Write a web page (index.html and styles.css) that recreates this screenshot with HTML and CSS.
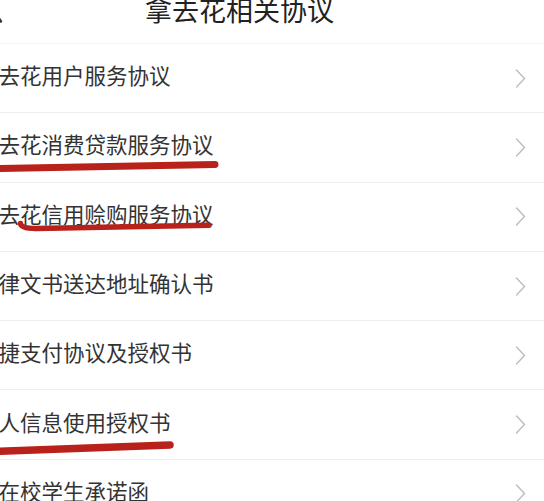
FILE: index.html
```html
<!DOCTYPE html>
<html lang="zh-CN">
<head>
<meta charset="utf-8">
<title>拿去花相关协议</title>
<link rel="stylesheet" href="styles.css">
</head>
<body>
<div class="page">
  <header class="nav">
    <svg class="back" width="4" height="43" viewBox="0 0 4 43"><path d="M-4,14 L1,21.5" stroke="#333" stroke-width="2.4" fill="none" stroke-linecap="round"/></svg>
    <h1 class="title">拿去花相关协议</h1>
  </header>
  <ul class="list">
    <li class="row"><span class="label">拿去花用户服务协议</span><svg class="chev" width="11" height="19" viewBox="0 0 11 19"><polyline points="1.5,1 9.5,9.5 1.5,18" /></svg></li>
    <li class="row"><span class="label">拿去花消费贷款服务协议</span><svg class="chev" width="11" height="19" viewBox="0 0 11 19"><polyline points="1.5,1 9.5,9.5 1.5,18" /></svg></li>
    <li class="row"><span class="label">拿去花信用赊购服务协议</span><svg class="chev" width="11" height="19" viewBox="0 0 11 19"><polyline points="1.5,1 9.5,9.5 1.5,18" /></svg></li>
    <li class="row"><span class="label">法律文书送达地址确认书</span><svg class="chev" width="11" height="19" viewBox="0 0 11 19"><polyline points="1.5,1 9.5,9.5 1.5,18" /></svg></li>
    <li class="row"><span class="label">快捷支付协议及授权书</span><svg class="chev" width="11" height="19" viewBox="0 0 11 19"><polyline points="1.5,1 9.5,9.5 1.5,18" /></svg></li>
    <li class="row"><span class="label">个人信息使用授权书</span><svg class="chev" width="11" height="19" viewBox="0 0 11 19"><polyline points="1.5,1 9.5,9.5 1.5,18" /></svg></li>
    <li class="row"><span class="label">非在校学生承诺函</span><svg class="chev" width="11" height="19" viewBox="0 0 11 19"><polyline points="1.5,1 9.5,9.5 1.5,18" /></svg></li>
  </ul>
  <svg class="marks" width="544" height="501" viewBox="0 0 544 501">
    <path d="M-6,168.5 Q110,166.5 215,164.5" stroke-width="7"/>
    <path d="M20.5,223.5 Q21,228.5 36,228.5 L209,225.3" stroke-width="5.5"/>
    <path d="M-6,451.5 Q85,448 170,445" stroke-width="7.5"/>
  </svg>
</div>
</body>
</html>
```
FILE: styles.css
```css
* { box-sizing: border-box; }
html, body {
  margin: 0;
  padding: 0;
  background: #ffffff;
}
body {
  font-family: "Noto Sans CJK SC", "Noto Sans", sans-serif;
  color: #333333;
  overflow: hidden;
}
.page {
  position: relative;
  width: 544px;
  height: 501px;
  overflow: hidden;
}
.nav {
  display: flex;
  align-items: flex-start;
  height: 44px;
  border-bottom: 1px solid #f4f4f4;
}
.back {
  flex: none;
  display: block;
}
.title {
  margin: -5px 0 0 141px;
  font-size: 27px;
  line-height: 30px;
  font-weight: 400;
  color: #222222;
  letter-spacing: 0;
}
.list {
  list-style: none;
  margin: 0;
  padding: 0;
}
.row {
  display: flex;
  align-items: center;
  justify-content: space-between;
  height: 69.3px;
  border-bottom: 1px solid #efefef;
  padding-right: 18px;
}
.label {
  margin-left: -23px;
  margin-bottom: 6px;
  font-size: 21.5px;
  line-height: 26px;
  color: #333333;
  white-space: nowrap;
}
.chev {
  flex: none;
  display: block;
}
.chev polyline {
  fill: none;
  stroke: #bdbdbd;
  stroke-width: 1.4;
  stroke-linecap: round;
  stroke-linejoin: round;
}
.marks {
  position: absolute;
  left: 0;
  top: 0;
  pointer-events: none;
}
.marks path {
  fill: none;
  stroke: #b9221a;
  stroke-linecap: round;
  stroke-linejoin: round;
}
```
